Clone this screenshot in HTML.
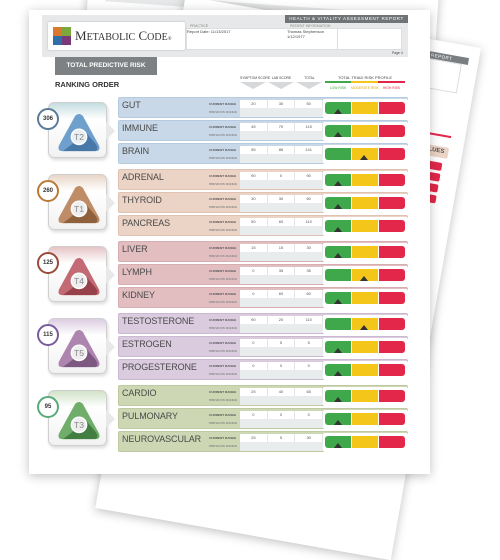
<!DOCTYPE html>
<html><head><meta charset="utf-8"><style>
*{margin:0;padding:0;box-sizing:border-box}
body{width:500px;height:500px;background:#fff;position:relative;overflow:hidden;font-family:"Liberation Sans",sans-serif}
.a{position:absolute}
.pg{position:absolute;background:#fff;box-shadow:0 2px 10px rgba(0,0,0,.25)}
.r{position:absolute;left:118px;width:290px;height:21px;border-radius:2px}
.r .n{position:absolute;left:3px;top:2px;font-size:9px;color:#4a4a4a;letter-spacing:-.1px}
.r .l1,.r .l2{position:absolute;left:90px;font-size:3.1px;font-weight:bold;color:#555;white-space:nowrap}
.r .l1{top:4px}.r .l2{top:12px;color:#888}
.r .c{position:absolute;left:121px;top:2px;width:83px;height:8px;background:#fff;display:flex}
.r .p{position:absolute;left:121px;top:10px;width:83px;height:9px;background:#e9ecec}
.r .c i{flex:1;font-style:normal;font-size:4px;color:#555;text-align:center;line-height:8px;border-right:1px solid #e4e4e4}
.r .bar{position:absolute;left:204px;top:1px;width:85px;height:19px;background:#fff;border-radius:2px}
.bar b{position:absolute;top:3px;height:12px}
.bar .gr{left:2px;width:26px;background:#3fa84a;border-radius:3px 0 0 3px}
.bar .ye{left:29px;width:26px;background:#f4c61a}
.bar .rd{left:56px;width:26px;background:#e2274a;border-radius:0 3px 3px 0}
.bar s{position:absolute;top:10px;width:0;height:0;border-left:4px solid transparent;border-right:4px solid transparent;border-bottom:5px solid #333}
.g1{background:#c8d8e8;border:1px solid #b7cbe0}
.g2{background:#ebd3c5;border:1px solid #dfc2b2}
.g3{background:#e2bec1;border:1px solid #d6aeb2}
.g4{background:#dacbdf;border:1px solid #cbb8d2}
.g5{background:#cdd7b3;border:1px solid #bfcaa2}
.bx{position:absolute;left:48px;width:59px;height:56px;border:1px solid #cfcfcf;border-radius:6px;box-shadow:1px 2px 3px rgba(0,0,0,.15)}
.ptr{position:absolute;left:106px;width:0;height:0;border-top:9px solid transparent;border-bottom:9px solid transparent;border-left:9px solid #e8e8e8}
.cir{position:absolute;left:37px;width:22px;height:22px;border-radius:50%;background:#fff;border:2px solid;font-size:6px;font-weight:bold;color:#333;text-align:center;line-height:18px}
.hd{font-size:4px;color:#444;white-space:nowrap}
.rb{position:absolute;left:124px;width:62px;height:8px;background:#e2274a;border-radius:2px}
</style></head><body>
<!-- background pages -->
<div class="pg" style="left:88px;top:-30px;width:350px;height:60px;transform:rotate(4deg)"></div>
<div class="a" style="left:105px;top:3px;width:280px;height:8px;background:#e6e8e9;transform:rotate(4deg)"></div>
<div class="pg" style="left:181px;top:48px;width:300px;height:520px;transform:rotate(10deg);transform-origin:top right">
 <div class="a" style="left:212px;top:12px;width:78px;height:7px;background:#7a7e80;color:#fff;font-size:4.5px;line-height:7px;letter-spacing:.5px;padding-left:40px">REPORT</div>
 <div class="a" style="left:212px;top:19px;width:72px;height:30px;border:1px solid #ddd"></div>
 <div class="a" style="left:220px;top:92px;width:66px;height:2px;background:#e2274a"></div>
 <div class="a" style="left:220px;top:104px;width:66px;height:11px;background:#ebd3c5;border-radius:2px;font-size:6px;font-weight:bold;color:#555;line-height:11px;padding-left:38px">VALUES</div>
 <div class="rb" style="left:220px;top:120px"></div>
 <div class="rb" style="left:220px;top:131px"></div>
 <div class="rb" style="left:220px;top:142px"></div>
 <div class="rb" style="left:220px;top:153px"></div>
 <div class="a" style="left:220px;top:205px;width:60px;height:10px;background:#ebd3c5;border-radius:2px"></div>
 <div class="rb" style="left:220px;top:220px"></div>
 <div class="rb" style="left:220px;top:231px"></div>
</div>
<!-- main page -->
<div class="pg" style="left:29px;top:10px;width:401px;height:464px"></div>
<!-- header -->
<div class="a" style="left:42px;top:15px;width:366px;height:42px;background:#e6e8e9"></div>
<div class="a" style="left:285px;top:15px;width:123px;height:8px;background:#707476;color:#fff;font-size:4.5px;letter-spacing:.6px;line-height:8px;text-align:center">HEALTH &amp; VITALITY ASSESSMENT REPORT</div>
<div class="a" style="left:48px;top:22px;width:137px;height:28px;background:#fff;border-radius:2px;box-shadow:0 0 2px rgba(0,0,0,.2)"></div>
<div class="a" style="left:53px;top:27px;width:9px;height:9px;background:#d9782e"></div>
<div class="a" style="left:62px;top:27px;width:9px;height:9px;background:#7aa83c"></div>
<div class="a" style="left:53px;top:36px;width:9px;height:9px;background:#2e6fa8"></div>
<div class="a" style="left:62px;top:36px;width:9px;height:9px;background:#7a3a7a"></div>
<div class="a" style="left:75px;top:28px;font-family:'Liberation Serif',serif;font-size:13px;color:#333;white-space:nowrap">M<span style="font-size:10px">ETABOLIC</span> C<span style="font-size:10px">ODE</span><span style="font-size:5px">®</span></div>
<div class="a" style="left:186px;top:28px;width:216px;height:22px;background:#fff;border:1px solid #ddd"></div>
<div class="a" style="left:337px;top:28px;width:1px;height:22px;background:#ddd"></div>
<div class="a hd" style="left:190px;top:24px;color:#888;font-size:3.6px">PRACTICE</div>
<div class="a hd" style="left:187px;top:29px">Report Date: 11/13/2017</div>
<div class="a hd" style="left:290px;top:24px;color:#888;font-size:3.6px">PATIENT INFORMATION</div>
<div class="a hd" style="left:287px;top:29px">Thomas Stephenson</div>
<div class="a hd" style="left:287px;top:34px">1/12/1977</div>
<div class="a hd" style="left:392px;top:51px;font-size:3.4px">Page 4</div>
<div class="a" style="left:55px;top:57px;width:102px;height:18px;background:#7d8183;color:#fff;font-size:6.5px;font-weight:bold;line-height:18px;text-align:center">TOTAL PREDICTIVE RISK</div>
<div class="a" style="left:55px;top:80px;font-size:7.5px;font-weight:bold;color:#333">RANKING ORDER</div>
<div class="a hd" style="left:240px;top:76px;width:27px;text-align:center;font-size:3.4px">SYMPTOM SCORE</div>
<div class="a hd" style="left:268px;top:76px;width:27px;text-align:center;font-size:3.4px">LAB SCORE</div>
<div class="a hd" style="left:296px;top:76px;width:27px;text-align:center;font-size:3.4px">TOTAL</div>
<div class="a" style="left:240px;top:82px;width:0;border-left:13px solid transparent;border-right:13px solid transparent;border-top:7px solid #d6d8d9"></div>
<div class="a" style="left:268px;top:82px;width:0;border-left:13px solid transparent;border-right:13px solid transparent;border-top:7px solid #d6d8d9"></div>
<div class="a" style="left:296px;top:82px;width:0;border-left:13px solid transparent;border-right:13px solid transparent;border-top:7px solid #d6d8d9"></div>
<div class="a hd" style="left:325px;top:75px;width:80px;text-align:center;font-size:4px">TOTAL TRIAD RISK PROFILE</div>
<div class="a" style="left:325px;top:81px;width:26px;height:2px;background:#3fa84a"></div>
<div class="a" style="left:351px;top:81px;width:27px;height:2px;background:#f4c61a"></div>
<div class="a" style="left:378px;top:81px;width:27px;height:2px;background:#e2274a"></div>
<div class="a hd" style="left:325px;top:86px;width:26px;text-align:center;font-size:3.4px;color:#3fa84a">LOW RISK</div>
<div class="a hd" style="left:351px;top:86px;width:27px;text-align:center;font-size:3.4px;color:#e0a800">MODERATE RISK</div>
<div class="a hd" style="left:378px;top:86px;width:27px;text-align:center;font-size:3.4px;color:#e2274a">HIGH RISK</div>

<!-- badges -->
<div class="bx" style="top:102px;background:linear-gradient(#c5dde0 0,#fff 30%,#f2f2f2)"></div><div class="ptr" style="top:122px"></div>
<svg class="a" style="left:57px;top:113px" width="44" height="42" viewBox="0 0 46 44"><path d="M19 3Q23 -1 27 3L44 34Q46 40 40 40L6 40Q0 40 2 34Z" fill="#6f9fcc"/><path d="M6 40L40 40Q44 38 41 33L30 20Q20 30 6 40Z" fill="#2f5f8f" opacity=".6"/><circle cx="23" cy="25" r="8" fill="#e8eef2" stroke="#fff" stroke-width="1.5"/><text x="23" y="28.5" font-size="9" fill="#888" text-anchor="middle" font-family="Liberation Sans">T2</text></svg>
<div class="cir" style="top:108px;border-color:#5b7c98">306</div>

<div class="bx" style="top:174px;background:linear-gradient(#e8d6c8 0,#fff 30%,#f2f2f2)"></div><div class="ptr" style="top:194px"></div>
<svg class="a" style="left:57px;top:185px" width="44" height="42" viewBox="0 0 46 44"><path d="M19 3Q23 -1 27 3L44 34Q46 40 40 40L6 40Q0 40 2 34Z" fill="#be8c66"/><path d="M6 40L40 40Q44 38 41 33L30 20Q20 30 6 40Z" fill="#6e4220" opacity=".6"/><circle cx="23" cy="25" r="8" fill="#eee" stroke="#fff" stroke-width="1.5"/><text x="23" y="28.5" font-size="9" fill="#888" text-anchor="middle" font-family="Liberation Sans">T1</text></svg>
<div class="cir" style="top:180px;border-color:#b97a3a">260</div>

<div class="bx" style="top:246px;background:linear-gradient(#e6c4c6 0,#fff 30%,#f2f2f2)"></div><div class="ptr" style="top:266px"></div>
<svg class="a" style="left:57px;top:257px" width="44" height="42" viewBox="0 0 46 44"><path d="M19 3Q23 -1 27 3L44 34Q46 40 40 40L6 40Q0 40 2 34Z" fill="#c26b74"/><path d="M6 40L40 40Q44 38 41 33L30 20Q20 30 6 40Z" fill="#7a2630" opacity=".6"/><circle cx="23" cy="25" r="8" fill="#eee" stroke="#fff" stroke-width="1.5"/><text x="23" y="28.5" font-size="9" fill="#888" text-anchor="middle" font-family="Liberation Sans">T4</text></svg>
<div class="cir" style="top:252px;border-color:#9a4c3c">125</div>

<div class="bx" style="top:318px;background:linear-gradient(#dccde2 0,#fff 30%,#f2f2f2)"></div><div class="ptr" style="top:338px"></div>
<svg class="a" style="left:57px;top:329px" width="44" height="42" viewBox="0 0 46 44"><path d="M19 3Q23 -1 27 3L44 34Q46 40 40 40L6 40Q0 40 2 34Z" fill="#ad85ae"/><path d="M6 40L40 40Q44 38 41 33L30 20Q20 30 6 40Z" fill="#5e3a60" opacity=".6"/><circle cx="23" cy="25" r="8" fill="#eee" stroke="#fff" stroke-width="1.5"/><text x="23" y="28.5" font-size="9" fill="#888" text-anchor="middle" font-family="Liberation Sans">T5</text></svg>
<div class="cir" style="top:324px;border-color:#7a5c9c">115</div>

<div class="bx" style="top:390px;background:linear-gradient(#d2e2c8 0,#fff 30%,#f2f2f2)"></div><div class="ptr" style="top:410px"></div>
<svg class="a" style="left:57px;top:401px" width="44" height="42" viewBox="0 0 46 44"><path d="M19 3Q23 -1 27 3L44 34Q46 40 40 40L6 40Q0 40 2 34Z" fill="#6fae6a"/><path d="M6 40L40 40Q44 38 41 33L30 20Q20 30 6 40Z" fill="#245e28" opacity=".6"/><circle cx="23" cy="25" r="8" fill="#eee" stroke="#fff" stroke-width="1.5"/><text x="23" y="28.5" font-size="9" fill="#888" text-anchor="middle" font-family="Liberation Sans">T3</text></svg>
<div class="cir" style="top:396px;border-color:#5aaa7a">95</div>

<!-- rows -->
<div class="r g1" style="top:97px"><span class="n">GUT</span><span class="l1">CURRENT RANGE</span><span class="l2">PREVIOUS RANGE</span><div class="c"><i>20</i><i>30</i><i>50</i></div><div class="p"></div><div class="bar"><b class="gr"></b><b class="ye"></b><b class="rd"></b><s style="left:11px"></s></div></div>
<div class="r g1" style="top:120px"><span class="n">IMMUNE</span><span class="l1">CURRENT RANGE</span><span class="l2">PREVIOUS RANGE</span><div class="c"><i>45</i><i>70</i><i>115</i></div><div class="p"></div><div class="bar"><b class="gr"></b><b class="ye"></b><b class="rd"></b><s style="left:11px"></s></div></div>
<div class="r g1" style="top:143px"><span class="n">BRAIN</span><span class="l1">CURRENT RANGE</span><span class="l2">PREVIOUS RANGE</span><div class="c"><i>55</i><i>86</i><i>141</i></div><div class="p"></div><div class="bar"><b class="gr"></b><b class="ye"></b><b class="rd"></b><s style="left:37px"></s></div></div>

<div class="r g2" style="top:169px"><span class="n">ADRENAL</span><span class="l1">CURRENT RANGE</span><span class="l2">PREVIOUS RANGE</span><div class="c"><i>90</i><i>0</i><i>90</i></div><div class="p"></div><div class="bar"><b class="gr"></b><b class="ye"></b><b class="rd"></b><s style="left:11px"></s></div></div>
<div class="r g2" style="top:192px"><span class="n">THYROID</span><span class="l1">CURRENT RANGE</span><span class="l2">PREVIOUS RANGE</span><div class="c"><i>30</i><i>30</i><i>60</i></div><div class="p"></div><div class="bar"><b class="gr"></b><b class="ye"></b><b class="rd"></b><s style="left:11px"></s></div></div>
<div class="r g2" style="top:215px"><span class="n">PANCREAS</span><span class="l1">CURRENT RANGE</span><span class="l2">PREVIOUS RANGE</span><div class="c"><i>50</i><i>60</i><i>110</i></div><div class="p"></div><div class="bar"><b class="gr"></b><b class="ye"></b><b class="rd"></b><s style="left:11px"></s></div></div>

<div class="r g3" style="top:241px"><span class="n">LIVER</span><span class="l1">CURRENT RANGE</span><span class="l2">PREVIOUS RANGE</span><div class="c"><i>15</i><i>15</i><i>30</i></div><div class="p"></div><div class="bar"><b class="gr"></b><b class="ye"></b><b class="rd"></b><s style="left:11px"></s></div></div>
<div class="r g3" style="top:264px"><span class="n">LYMPH</span><span class="l1">CURRENT RANGE</span><span class="l2">PREVIOUS RANGE</span><div class="c"><i>0</i><i>35</i><i>35</i></div><div class="p"></div><div class="bar"><b class="gr"></b><b class="ye"></b><b class="rd"></b><s style="left:37px"></s></div></div>
<div class="r g3" style="top:287px"><span class="n">KIDNEY</span><span class="l1">CURRENT RANGE</span><span class="l2">PREVIOUS RANGE</span><div class="c"><i>0</i><i>60</i><i>60</i></div><div class="p"></div><div class="bar"><b class="gr"></b><b class="ye"></b><b class="rd"></b><s style="left:11px"></s></div></div>

<div class="r g4" style="top:313px"><span class="n">TESTOSTERONE</span><span class="l1">CURRENT RANGE</span><span class="l2">PREVIOUS RANGE</span><div class="c"><i>90</i><i>20</i><i>110</i></div><div class="p"></div><div class="bar"><b class="gr"></b><b class="ye"></b><b class="rd"></b><s style="left:37px"></s></div></div>
<div class="r g4" style="top:336px"><span class="n">ESTROGEN</span><span class="l1">CURRENT RANGE</span><span class="l2">PREVIOUS RANGE</span><div class="c"><i>0</i><i>5</i><i>5</i></div><div class="p"></div><div class="bar"><b class="gr"></b><b class="ye"></b><b class="rd"></b><s style="left:11px"></s></div></div>
<div class="r g4" style="top:359px"><span class="n">PROGESTERONE</span><span class="l1">CURRENT RANGE</span><span class="l2">PREVIOUS RANGE</span><div class="c"><i>0</i><i>0</i><i>0</i></div><div class="p"></div><div class="bar"><b class="gr"></b><b class="ye"></b><b class="rd"></b><s style="left:11px"></s></div></div>

<div class="r g5" style="top:385px"><span class="n">CARDIO</span><span class="l1">CURRENT RANGE</span><span class="l2">PREVIOUS RANGE</span><div class="c"><i>25</i><i>40</i><i>65</i></div><div class="p"></div><div class="bar"><b class="gr"></b><b class="ye"></b><b class="rd"></b><s style="left:11px"></s></div></div>
<div class="r g5" style="top:408px"><span class="n">PULMONARY</span><span class="l1">CURRENT RANGE</span><span class="l2">PREVIOUS RANGE</span><div class="c"><i>0</i><i>0</i><i>0</i></div><div class="p"></div><div class="bar"><b class="gr"></b><b class="ye"></b><b class="rd"></b><s style="left:11px"></s></div></div>
<div class="r g5" style="top:431px"><span class="n">NEUROVASCULAR</span><span class="l1">CURRENT RANGE</span><span class="l2">PREVIOUS RANGE</span><div class="c"><i>25</i><i>5</i><i>30</i></div><div class="p"></div><div class="bar"><b class="gr"></b><b class="ye"></b><b class="rd"></b><s style="left:11px"></s></div></div>
</body></html>
